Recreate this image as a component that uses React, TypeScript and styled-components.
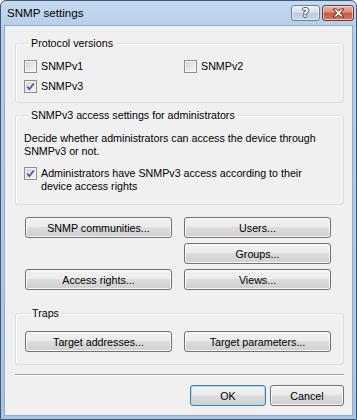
import React from "react"
import styled, { createGlobalStyle, css } from "styled-components"

const GlobalStyle = createGlobalStyle`
  html, body {
    margin: 0;
    padding: 0;
    background: #ffffff;
  }
  body {
    font-family: "Liberation Sans", Arial, sans-serif;
    font-size: 10.7px;
    color: #000;
  }
`

const Window = styled.div`
  width: 357px;
  height: 420px;
  box-sizing: border-box;
  border: 1px solid #3d5a7a;
  border-radius: 6px 6px 0 0;
  background: linear-gradient(#c6daef 0px, #b7cee9 24px, #aac3e0 100%);
  padding: 0 3px 3px 3px;
  display: flex;
  flex-direction: column;
`

const TitleBar = styled.div`
  height: 24px;
  display: flex;
  align-items: flex-start;
  padding-left: 3px;
`

const TitleText = styled.div`
  font-size: 11.6px;
  line-height: 24px;
  color: #000;
`

const CaptionButtons = styled.div`
  margin-left: auto;
  margin-top: 4px;
  margin-right: -1px;
  display: flex;
  gap: 2px;
`

const CaptionButton = styled.div<{ $close?: boolean }>`
  width: 29px;
  height: 16px;
  box-sizing: border-box;
  border: 1px solid #6c7f98;
  border-radius: 3px;
  display: flex;
  align-items: center;
  justify-content: center;
  background: linear-gradient(#e9f0f8 0%, #d4e1ef 45%, #bccde3 50%, #c7d7ea 100%);
  box-shadow: inset 0 0 0 1px rgba(255, 255, 255, 0.55);
  ${p => p.$close && css`
    width: 32px;
    border-color: #6e3b33;
    background: linear-gradient(#eab3a5 0%, #dc8c7a 45%, #c9563f 50%, #d37a62 100%);
  `}
`

const HelpGlyph = styled.span`
  font-family: "DejaVu Sans", sans-serif;
  font-weight: bold;
  font-size: 12px;
  line-height: 12px;
  color: #ffffff;
  text-shadow: 1px 0 0 #44566e, -1px 0 0 #44566e, 0 1px 0 #44566e, 0 -1px 0 #44566e;
`

const Client = styled.div`
  flex: 1;
  background: #f0f0f0;
  border: 1px solid #92abc9;
  display: flex;
  flex-direction: column;
  padding: 0 8px 0 10px;
`

const Group = styled.fieldset<{ $top: number }>`
  margin: ${p => p.$top}px 0 0 0;
  border: 1px solid #d5dfe5;
  border-radius: 3px;
  box-shadow: inset 1px 1px 0 #ffffff;
  min-width: 0;
`

const Legend = styled.legend`
  margin-left: 5px;
  padding: 0 2px;
  line-height: 13px;
`

const VersionsGroup = styled(Group)`
  padding: 6px 8px 6px 8px;
`

const AccessGroup = styled(Group)`
  padding: 10px 8px 11px 8px;
`

const TrapsGroup = styled(Group)`
  padding: 11px 9px 12px 9px;
`

const CheckGrid = styled.div`
  display: grid;
  grid-template-columns: 160px auto;
  grid-auto-rows: 20px;
  align-items: center;
`

const Text = styled.div`
  line-height: 13px;
`

const CheckRow = styled.label<{ $mt?: number }>`
  display: flex;
  align-items: flex-start;
  gap: 4px;
  line-height: 13px;
  margin-top: ${p => p.$mt ?? 0}px;
`

const Box = styled.span`
  width: 13px;
  height: 13px;
  flex: none;
  box-sizing: border-box;
  border: 1px solid #8e8f8f;
  background: linear-gradient(135deg, #cfd3d8 0%, #e9eaeb 60%, #f8f8f8 100%);
  box-shadow: inset 0 0 0 1px #f4f4f4;
  display: flex;
  align-items: center;
  justify-content: center;
`

const ButtonGrid = styled.div<{ $indent?: number; $top?: number }>`
  display: grid;
  grid-template-columns: 147px 147px;
  grid-auto-rows: 21px;
  column-gap: 12px;
  row-gap: 5px;
  margin-left: ${p => p.$indent ?? 0}px;
  margin-top: ${p => p.$top ?? 0}px;
`

const Button = styled.button<{ $default?: boolean; $col?: number; $width?: number }>`
  height: 21px;
  box-sizing: border-box;
  padding: 0;
  margin: 0;
  ${p => p.$col && css`grid-column: ${p.$col};`}
  ${p => p.$width && css`width: ${p.$width}px;`}
  border: 1px solid #707070;
  border-radius: 3px;
  background: linear-gradient(#f2f2f2 0%, #ebebeb 48%, #dddddd 50%, #cfcfcf 100%);
  box-shadow: inset 0 0 0 1px #fbfbfb;
  font-family: "Liberation Sans", Arial, sans-serif;
  font-size: 10.7px;
  color: #000;
  ${p => p.$default && css`
    border-color: #3c7fb1;
    box-shadow: inset 0 0 0 1px #a9dcf4;
  `}
`

const Separator = styled.div`
  margin-top: 9px;
  height: 1px;
  background: #a0a0a0;
  border-bottom: 1px solid #ffffff;
`

const Footer = styled.div`
  margin-top: 9px;
  display: flex;
  justify-content: flex-end;
  gap: 4px;
`

const Check = () => (
  <svg width="9" height="9" viewBox="0 0 9 9">
    <path d="M1.2 4.6 L3.4 7.2 L7.8 1.4" stroke="#3f5a99" strokeWidth="1.7" fill="none" />
  </svg>
)

const CheckBox: React.FC<{ checked?: boolean; mt?: number; children: React.ReactNode }> = ({ checked, mt, children }) => (
  <CheckRow $mt={mt}>
    <Box>{checked && <Check />}</Box>
    <span>{children}</span>
  </CheckRow>
)

const CloseIcon = () => (
  <svg width="13" height="10" viewBox="0 0 13 10">
    <path
      d="M1 1 H4.5 L6.5 3.2 L8.5 1 H12 L8.3 5 L12 9 H8.5 L6.5 6.8 L4.5 9 H1 L4.7 5 Z"
      fill="#ffffff"
      stroke="#5a2a22"
      strokeWidth="1"
      strokeLinejoin="round"
    />
  </svg>
)

const App: React.FC = () => (
  <>
    <GlobalStyle />
    <Window>
      <TitleBar>
        <TitleText>SNMP settings</TitleText>
        <CaptionButtons>
          <CaptionButton><HelpGlyph>?</HelpGlyph></CaptionButton>
          <CaptionButton $close><CloseIcon /></CaptionButton>
        </CaptionButtons>
      </TitleBar>
      <Client>
        <VersionsGroup $top={11}>
          <Legend>Protocol versions</Legend>
          <CheckGrid>
            <CheckBox>SNMPv1</CheckBox>
            <CheckBox>SNMPv2</CheckBox>
            <CheckBox checked>SNMPv3</CheckBox>
          </CheckGrid>
        </VersionsGroup>

        <AccessGroup $top={6}>
          <Legend>SNMPv3 access settings for administrators</Legend>
          <Text>
            Decide whether administrators can access the device through<br />
            SNMPv3 or not.
          </Text>
          <CheckBox checked mt={9}>
            Administrators have SNMPv3 access according to their<br />
            device access rights
          </CheckBox>
        </AccessGroup>

        <ButtonGrid $indent={10} $top={12}>
          <Button>SNMP communities...</Button>
          <Button>Users...</Button>
          <Button $col={2}>Groups...</Button>
          <Button>Access rights...</Button>
          <Button>Views...</Button>
        </ButtonGrid>

        <TrapsGroup $top={17}>
          <Legend>Traps</Legend>
          <ButtonGrid>
            <Button>Target addresses...</Button>
            <Button>Target parameters...</Button>
          </ButtonGrid>
        </TrapsGroup>

        <Separator />

        <Footer>
          <Button $default $width={76}>OK</Button>
          <Button $width={74}>Cancel</Button>
        </Footer>
      </Client>
    </Window>
  </>
)

export default App
